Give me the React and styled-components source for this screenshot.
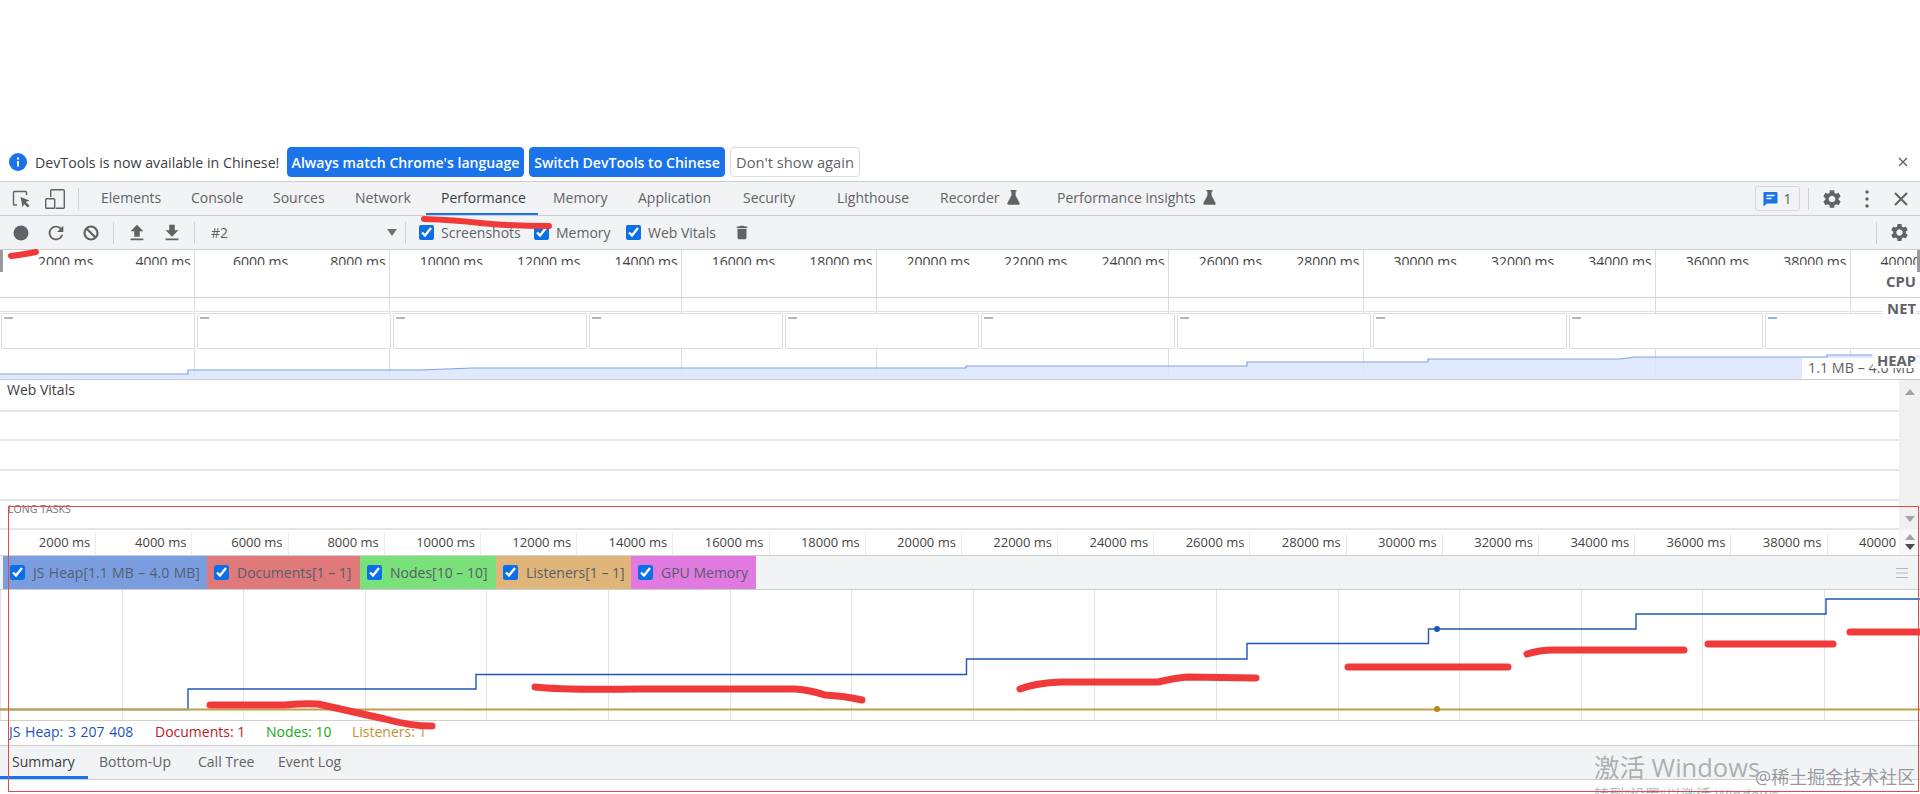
import React from "react";
import styled, { createGlobalStyle } from "styled-components";

const Global = createGlobalStyle`
  html, body { margin: 0; padding: 0; background: #fff; }
  body { width: 1920px; height: 794px; overflow: hidden; font-family: "Open Sans", "Liberation Sans", sans-serif; }
  * { box-sizing: border-box; }
`;

const Page = styled.div`
  position: relative;
  width: 1920px;
  height: 794px;
  overflow: hidden;
  padding-top: 143px;
  font-size: 14px;
  color: #5f6368;
`;

const InfoBar = styled.div`
  height: 39px;
  display: flex;
  align-items: center;
  border-bottom: 1px solid #cbcdd1;
  padding-left: 9px;
`;
const InfoText = styled.span`
  margin-left: 8px;
  padding-top: 1px;
  width: 252px;
  color: #3c4043;
  font-size: 14.2px;
  white-space: nowrap;
`;
const InfoButton = styled.div`
  height: 30px;
  width: ${p => p.$w}px;
  margin-right: 5px;
  border-radius: 4px;
  display: flex;
  align-items: center;
  justify-content: center;
  white-space: nowrap;
  font-size: ${p => (p.$primary ? 14.1 : 14.7)}px;
  font-weight: ${p => (p.$primary ? 600 : 400)};
  color: ${p => (p.$primary ? "#fff" : "#5f6368")};
  background: ${p => (p.$primary ? "#1a73e8" : "#fff")};
  border: 1px solid ${p => (p.$primary ? "#1a73e8" : "#dadce0")};
`;
const CloseInfo = styled.div`
  margin-left: auto;
  width: 34px;
  display: flex;
  justify-content: center;
`;

const Bar = styled.div`
  height: 34px;
  display: flex;
  align-items: center;
  background: #f1f3f4;
  border-bottom: 1px solid #cbcdd1;
  flex-shrink: 0;
`;
const Slot = styled.div`
  width: ${p => p.$w || 35}px;
  margin-left: ${p => p.$ml || 0}px;
  height: 100%;
  display: flex;
  align-items: center;
  justify-content: center;
  flex-shrink: 0;
`;
const Sep = styled.div`
  width: 1px;
  height: 22px;
  background: #cfd1d4;
  margin: 0 ${p => p.$mr ?? 5}px 0 ${p => p.$ml ?? 5}px;
  flex-shrink: 0;
`;
const Tab = styled.div`
  position: relative;
  height: 100%;
  width: ${p => p.$w}px;
  padding: 0 0 3px ${p => p.$pl ?? 15}px;
  display: flex;
  align-items: center;
  gap: 7px;
  white-space: nowrap;
  color: ${p => (p.$active ? "#3c4043" : "#5f6368")};
  &::after {
    content: "";
    display: ${p => (p.$active ? "block" : "none")};
    position: absolute;
    left: 0;
    right: 0;
    bottom: 0;
    height: ${p => p.$lineH || 2}px;
    background: #1a73e8;
  }
`;
const Tabs = styled.div`
  display: flex;
  height: 100%;
  margin-left: ${p => p.$ml || 0}px;
`;
const RightGroup = styled.div`
  margin-left: auto;
  display: flex;
  align-items: center;
  height: 100%;
  padding-right: ${p => p.$pr || 0}px;
`;
const IssueButton = styled.div`
  width: 45px;
  height: 25px;
  border: 1px solid #d5d7da;
  border-radius: 3px;
  display: flex;
  align-items: center;
  justify-content: center;
  gap: 5px;
  font-size: 14px;
`;
const TargetSelect = styled.div`
  width: 200px;
  padding: 0 3px 0 11px;
  display: flex;
  align-items: center;
  justify-content: space-between;
`;
const Caret = styled.div`
  width: 0;
  height: 0;
  border-left: 5px solid transparent;
  border-right: 5px solid transparent;
  border-top: 7px solid #6e7276;
`;
const Check = styled.input.attrs({ type: "checkbox", defaultChecked: true })`
  width: 15px;
  height: 15px;
  margin: 0;
  accent-color: #0b6fe8;
  flex-shrink: 0;
`;
const CheckItem = styled.label`
  width: ${p => p.$w}px;
  margin-left: ${p => p.$ml || 0}px;
  display: flex;
  align-items: center;
  gap: 7px;
  white-space: nowrap;
  flex-shrink: 0;
`;

const Overview = styled.div`
  position: relative;
  height: 130px;
  border-bottom: 1px solid #c9cbce;
  overflow: hidden;
  background-image: repeating-linear-gradient(90deg, transparent 0 96.9px, #dcdcdc 96.9px 97.4px);
`;
const OverRuler = styled.div`
  display: flex;
  height: 15px;
  overflow: hidden;
`;
const OverCell = styled.div`
  flex: 0 0 97.4px;
  text-align: right;
  padding-right: 4px;
  line-height: 23px;
  color: #444;
  white-space: nowrap;
`;
const CpuTrack = styled.div`
  height: 33px;
  border-bottom: 1px solid #d4d4d4;
`;
const NetTrack = styled.div`
  height: 14px;
  border-bottom: 1px solid #e2e2e2;
`;
const Frames = styled.div`
  display: flex;
  gap: 2px;
  margin-top: 1px;
  padding-left: 1px;
  height: 36px;
  background: #fff;
  width: 1960px;
`;
const Frame = styled.div`
  flex: 0 0 194px;
  border: 1px solid #dcdcdc;
  border-radius: 1px;
  padding: 3px 0 0 2px;
  &::before {
    content: "";
    display: block;
    width: 9px;
    height: 2px;
    background: ${p => (p.$last ? "#8ab4e8" : "#b5b5b5")};
  }
`;
const HeapSvg = styled.svg`
  display: block;
  width: 1920px;
  height: 30px;
`;
const Handle = styled.div`
  position: absolute;
  top: 0;
  ${p => (p.$right ? "right: 0;" : "left: 0;")}
  width: 3px;
  height: 22px;
  background: #9a9a9a;
`;
const TrackLabel = styled.div`
  position: absolute;
  right: 4px;
  top: ${p => p.$top}px;
  height: ${p => p.$h || 18}px;
  font-size: 14.8px;
  line-height: 18px;
  font-weight: 700;
  color: #5f6368;
  background: ${p => (p.$bg ? "#fff" : "transparent")};
  padding-left: ${p => (p.$bg ? 4 : 0)}px;
  overflow: hidden;
`;
const RangeLabel = styled.div`
  position: absolute;
  right: 0;
  bottom: 0;
  width: 118px;
  height: 21px;
  padding-left: 6px;
  line-height: 20px;
  background: #fff;
  white-space: nowrap;
  overflow: hidden;
  font-size: 14.3px;
  color: #5f6368;
`;

const ScrollArea = styled.div`
  display: flex;
  height: 176px;
`;
const ScrollMain = styled.div`
  width: 1899px;
  overflow: hidden;
`;
const VitalRow = styled.div`
  height: ${p => p.$h}px;
  border-bottom: 2px solid #e6e6e6;
  padding-left: 7px;
  color: #3c4043;
  line-height: 20px;
  white-space: nowrap;
`;
const LongTasks = styled.div`
  height: 29px;
  border-bottom: 2px solid #e6e6e6;
  padding-left: 8px;
  font-size: 10.6px;
  line-height: 17px;
  color: #777;
`;
const Ruler = styled.div`
  display: flex;
  height: 26px;
  width: 2000px;
  border-bottom: 1px solid #d0d0d0;
`;
const RulerCell = styled.div`
  flex: 0 0 96.2px;
  margin-top: 2px;
  text-align: right;
  padding-right: 5px;
  font-size: 13px;
  line-height: 21px;
  color: #444;
  white-space: nowrap;
  border-right: 1px solid #ececec;
`;
const Scrollbar = styled.div`
  width: 21px;
  display: flex;
  flex-direction: column;
  background: #f0f0f0;
`;
const ScrollTrack = styled.div`
  flex: 1;
  display: flex;
  flex-direction: column;
  align-items: center;
  justify-content: space-between;
  padding: 9px 0 7px;
`;
const Steppers = styled.div`
  height: 27px;
  background: #f7f7f7;
  border-bottom: 1px solid #d0d0d0;
  display: flex;
  flex-direction: column;
  align-items: center;
  justify-content: center;
  gap: 4px;
`;
const Arrow = styled.div`
  width: 0;
  height: 0;
  border-left: 5px solid transparent;
  border-right: 5px solid transparent;
  ${p => (p.$up ? "border-bottom" : "border-top")}: 6px solid ${p => p.$c || "#a3a3a3"};
`;

const Legend = styled.div`
  height: 34px;
  padding-left: 3px;
  display: flex;
  background: #f1f3f4;
  border-bottom: 1px solid #cbcdd1;
`;
const LegendItem = styled.label`
  width: ${p => p.$w}px;
  padding-left: 7px;
  display: flex;
  align-items: center;
  gap: 8px;
  background: ${p => p.$c};
  color: #565d6d;
  font-size: 14px;
  word-spacing: ${p => p.$ws || 0}px;
  white-space: nowrap;
  overflow: hidden;
`;
const Hamburger = styled.div`
  margin-left: auto;
  width: 36px;
  display: flex;
  align-items: center;
  justify-content: center;
`;

const Chart = styled.div`
  height: 131px;
  border-bottom: 1px solid #d0d0d0;
  background-image: repeating-linear-gradient(90deg, #e3e3e3 0 1px, transparent 1px 121.6px);
`;
const ChartSvg = styled.svg`
  display: block;
  width: 1920px;
  height: 130px;
`;
const StatusRow = styled.div`
  height: 25px;
  display: flex;
  align-items: center;
  padding: 0 0 3px 9px;
  border-bottom: 1px solid #cbcdd1;
  font-size: 14px;
`;
const Stat = styled.span`
  width: ${p => p.$w}px;
  color: ${p => p.$c};
  word-spacing: ${p => p.$ws || 0}px;
  white-space: nowrap;
`;

const RedBox = styled.div`
  position: absolute;
  left: 8px;
  top: 506px;
  width: 1911px;
  height: 286px;
  border: 1px solid #e24a4a;
  pointer-events: none;
`;
const Ink = styled.svg`
  position: absolute;
  left: 0;
  top: 0;
  width: 1920px;
  height: 794px;
  pointer-events: none;
`;
const ActivateTitle = styled.div`
  position: absolute;
  left: 1594px;
  top: 749px;
  font-family: "Open Sans", "Noto Sans CJK SC", sans-serif;
  font-size: 25.5px;
  line-height: 36px;
  color: rgba(110, 115, 120, 0.55);
  white-space: nowrap;
`;
const ActivateSub = styled.div`
  position: absolute;
  left: 1594px;
  top: 784px;
  font-family: "Open Sans", "Noto Sans CJK SC", sans-serif;
  font-size: 15px;
  line-height: 20px;
  color: rgba(110, 115, 120, 0.5);
  white-space: nowrap;
`;
const Mark = styled.div`
  position: absolute;
  left: 1755px;
  top: 764px;
  font-family: "Open Sans", "Noto Sans CJK SC", sans-serif;
  font-size: 18px;
  line-height: 26px;
  color: rgba(105, 110, 115, 0.7);
  text-shadow: 0 0 2px #fff;
  white-space: nowrap;
`;

const Gear = ({ size = 20 }) => (
  <svg width={size} height={size} viewBox="0 0 24 24" fill="#5f6368">
    <path d="M19.14 12.94c.04-.3.06-.61.06-.94 0-.32-.02-.64-.07-.94l2.03-1.58c.18-.14.23-.41.12-.61l-1.92-3.32c-.12-.22-.37-.29-.59-.22l-2.39.96c-.5-.38-1.03-.7-1.62-.94l-.36-2.54c-.04-.24-.24-.41-.48-.41h-3.84c-.24 0-.43.17-.47.41l-.36 2.54c-.59.24-1.13.57-1.62.94l-2.39-.96c-.22-.08-.47 0-.59.22L2.74 8.87c-.12.21-.08.47.12.61l2.03 1.58c-.05.3-.09.63-.09.94s.02.64.07.94l-2.03 1.58c-.18.14-.23.41-.12.61l1.92 3.32c.12.22.37.29.59.22l2.39-.96c.5.38 1.03.7 1.62.94l.36 2.54c.05.24.24.41.48.41h3.84c.24 0 .44-.17.47-.41l.36-2.54c.59-.24 1.13-.56 1.62-.94l2.39.96c.22.08.47 0 .59-.22l1.92-3.32c.12-.22.07-.47-.12-.61l-2.01-1.58zM12 15.6c-1.98 0-3.6-1.62-3.6-3.6s1.62-3.6 3.6-3.6 3.6 1.62 3.6 3.6-1.62 3.6-3.6 3.6z" />
  </svg>
);
const Flask = () => (
  <svg width="13" height="15" viewBox="0 0 13 15" fill="#5f6368">
    <path d="M3.5 0h6v1.4H8.6V5.6l4 7.4c.4.8-.1 1.7-1 1.7H1.4c-.9 0-1.4-.9-1-1.7l4-7.4V1.4h-.9z" />
  </svg>
);
const Mat = ({ d, size = 20 }) => (
  <svg width={size} height={size} viewBox="0 0 24 24" fill="#5f6368"><path d={d} /></svg>
);

const overLabels = Array.from({ length: 20 }, (_, i) => `${(i + 1) * 2000} ms`);
const frames = Array.from({ length: 10 }, (_, i) => i);

const heapPts = "0,374 188,374 188,370 420,370 473,368 966,368 966,366 1247,366 1247,362 1428,362 1428,359 1620,359 1635,357 1827,357 1827,355 1872,355";
const memPath = "M0 709.5H188V689H476V674.5H966.5V659H1247V643.5H1428.5V629H1636V614H1826V599H1920";

const strokes = [
  { d: "M424 219 Q 455 220 480 223 Q 510 226 549 226", w: 6 },
  { d: "M11 256 Q 20 255 36 252", w: 6 },
  { d: "M210 705 L 285 705 Q 305 703 318 704 L 385 719 Q 410 726 432 726", w: 7 },
  { d: "M535 687 Q 560 690 640 689 L 795 689 Q 810 690 825 695 Q 845 696 862 700", w: 7 },
  { d: "M1020 689 Q 1035 683 1062 682 L 1158 682 Q 1175 678 1187 677 L 1256 678", w: 7 },
  { d: "M1348 667 L 1508 667", w: 7 },
  { d: "M1527 654 Q 1540 650 1553 650 L 1684 650", w: 7 },
  { d: "M1708 644 L 1833 644", w: 7 },
  { d: "M1850 632 L 1920 632", w: 7 },
];

export default function App() {
  return (
    <Page>
      <Global />
      <InfoBar>
        <svg width="18" height="18" viewBox="0 0 18 18">
          <circle cx="9" cy="9" r="9" fill="#1a73e8" />
          <rect x="8" y="8" width="2" height="5.5" fill="#fff" />
          <rect x="8" y="4.5" width="2" height="2" fill="#fff" />
        </svg>
        <InfoText>DevTools is now available in Chinese!</InfoText>
        <InfoButton $primary $w={237}>Always match Chrome's language</InfoButton>
        <InfoButton $primary $w={196}>Switch DevTools to Chinese</InfoButton>
        <InfoButton $w={130}>Don't show again</InfoButton>
        <CloseInfo>
          <svg width="10" height="10" viewBox="0 0 10 10" stroke="#5f6368" strokeWidth="1.4"><path d="M1 1l8 8M9 1l-8 8" /></svg>
        </CloseInfo>
      </InfoBar>

      <Bar>
        <Slot $w={22} $ml={10}>
          <svg width="22" height="22" viewBox="0 0 22 22" fill="none">
            <path d="M7 17H4.5a1 1 0 0 1-1-1V4.5a1 1 0 0 1 1-1h11a1 1 0 0 1 1 1V7" stroke="#5f6368" strokeWidth="1.4" />
            <path d="M10.5 9l9 3.6-3.6 1.5 3.6 3.6-1.8 1.8-3.6-3.6-1.5 3.6z" fill="#5f6368" />
          </svg>
        </Slot>
        <Slot $w={20} $ml={13}>
          <svg width="20" height="20" viewBox="0 0 20 20" fill="none" stroke="#5f6368" strokeWidth="1.4">
            <path d="M5.7 8V1.7a1 1 0 0 1 1-1h11.6a1 1 0 0 1 1 1V18.3a1 1 0 0 1-1 1H10.5" />
            <rect x="0.7" y="9.7" width="9" height="9.6" rx="1" />
          </svg>
        </Slot>
        <Sep $ml={13} $mr={0} />
        <Tabs $ml={7}>
          <Tab $w={90}>Elements</Tab>
          <Tab $w={82}>Console</Tab>
          <Tab $w={82}>Sources</Tab>
          <Tab $w={86}>Network</Tab>
          <Tab $w={112} $active>Performance</Tab>
          <Tab $w={85}>Memory</Tab>
          <Tab $w={105}>Application</Tab>
          <Tab $w={94}>Security</Tab>
          <Tab $w={103}>Lighthouse</Tab>
          <Tab $w={117}>Recorder <Flask /></Tab>
          <Tab $w={190}>Performance insights <Flask /></Tab>
        </Tabs>
        <RightGroup $pr={2}>
          <IssueButton>
            <svg width="15" height="16" viewBox="0 0 15 16">
              <path d="M1.5 1h12a1 1 0 0 1 1 1v9.5a1 1 0 0 1-1 1H4L.5 15.5V2a1 1 0 0 1 1-1z" fill="#1a73e8" />
              <path d="M3.5 4.5h8M3.5 7.5h5" stroke="#fff" strokeWidth="1.3" />
            </svg>
            1
          </IssueButton>
          <Sep $ml={8} $mr={6} />
          <Slot $w={34}><Gear size={22} /></Slot>
          <Slot $w={35}>
            <svg width="4" height="18" viewBox="0 0 4 18" fill="#5f6368"><circle cx="2" cy="2" r="1.7" /><circle cx="2" cy="9" r="1.7" /><circle cx="2" cy="16" r="1.7" /></svg>
          </Slot>
          <Slot $w={34}>
            <svg width="14" height="14" viewBox="0 0 14 14" stroke="#5f6368" strokeWidth="2"><path d="M1 1l12 12M13 1L1 13" /></svg>
          </Slot>
        </RightGroup>
      </Bar>

      <Bar>
        <Slot $ml={3}><svg width="16" height="16" viewBox="0 0 16 16"><circle cx="8" cy="8" r="7.5" fill="#5f6368" /></svg></Slot>
        <Slot><Mat size={22} d="M17.65 6.35A7.958 7.958 0 0 0 12 4c-4.42 0-7.99 3.58-7.99 8s3.57 8 7.99 8c3.73 0 6.84-2.55 7.73-6h-2.08A5.99 5.99 0 0 1 12 18c-3.31 0-6-2.69-6-6s2.69-6 6-6c1.66 0 3.14.69 4.22 1.78L13 11h7V4l-2.35 2.35z" /></Slot>
        <Slot>
          <svg width="16" height="16" viewBox="0 0 16 16" fill="none" stroke="#5f6368" strokeWidth="2.2"><circle cx="8" cy="8" r="6.5" /><path d="M3.5 3.5l9 9" /></svg>
        </Slot>
        <Sep />
        <Slot><Mat size={22} d="M9 16h6v-6h4l-7-7-7 7h4v6zm-4 2h14v2H5v-2z" /></Slot>
        <Slot><Mat size={22} d="M19 9h-4V3H9v6H5l7 7 7-7zM5 18v2h14v-2H5z" /></Slot>
        <Sep />
        <TargetSelect>#2<Caret /></TargetSelect>
        <Sep />
        <CheckItem $ml={8} $w={115}><Check />Screenshots</CheckItem>
        <CheckItem $w={92}><Check />Memory</CheckItem>
        <CheckItem $w={107}><Check />Web Vitals</CheckItem>
        <Slot $w={18}><Mat size={23} d="M6 19c0 1.1.9 2 2 2h8c1.1 0 2-.9 2-2V7H6v12zM19 4h-3.5l-1-1h-5l-1 1H5v2h14V4z" /></Slot>
        <RightGroup $pr={3}>
          <Sep $ml={0} $mr={5} />
          <Slot $w={35}><Gear size={21} /></Slot>
        </RightGroup>
      </Bar>

      <Overview>
        <OverRuler>
          {overLabels.map(l => <OverCell key={l}>{l}</OverCell>)}
        </OverRuler>
        <CpuTrack />
        <NetTrack />
        <Frames>
          {frames.map(i => <Frame key={i} $last={i === 9} />)}
        </Frames>
        <HeapSvg viewBox="0 349 1920 30">
          <polygon points={`0,379 ${heapPts} 1920,355 1920,379`} fill="#dbe6fb" fillOpacity="0.85" />
          <polyline points={heapPts} fill="none" stroke="#7ea4e4" strokeWidth="1.2" />
        </HeapSvg>
        <Handle />
        <Handle $right />
        <RangeLabel>1.1 MB – 4.0 MB</RangeLabel>
        <TrackLabel $top={22}>CPU</TrackLabel>
        <TrackLabel $top={49} $bg>NET</TrackLabel>
        <TrackLabel $top={101} $h={17} $bg>HEAP</TrackLabel>
      </Overview>

      <ScrollArea>
        <ScrollMain>
          <VitalRow $h={32}>Web Vitals</VitalRow>
          <VitalRow $h={29} />
          <VitalRow $h={30} />
          <VitalRow $h={30} />
          <LongTasks>LONG TASKS</LongTasks>
          <Ruler>
            {overLabels.map(l => <RulerCell key={l}>{l}</RulerCell>)}
          </Ruler>
        </ScrollMain>
        <Scrollbar>
          <ScrollTrack><Arrow $up /><Arrow /></ScrollTrack>
          <Steppers><Arrow $up /><Arrow $c="#4a4a4a" /></Steppers>
        </Scrollbar>
      </ScrollArea>

      <Legend>
        <LegendItem $w={204} $c="#7a9de0" $ws={0.8}><Check />JS Heap[1.1 MB – 4.0 MB]</LegendItem>
        <LegendItem $w={153} $c="#e07a7a"><Check />Documents[1 – 1]</LegendItem>
        <LegendItem $w={136} $c="#7ae07a"><Check />Nodes[10 – 10]</LegendItem>
        <LegendItem $w={135} $c="#e0b57a"><Check />Listeners[1 – 1]</LegendItem>
        <LegendItem $w={125} $c="#e07ae0"><Check />GPU Memory</LegendItem>
        <Hamburger>
          <svg width="12" height="10" viewBox="0 0 12 10" stroke="#b4b6b9" strokeWidth="1"><path d="M0 .5h12M0 5h12M0 9.5h12" /></svg>
        </Hamburger>
      </Legend>

      <Chart>
        <ChartSvg viewBox="0 590 1920 130">
          <path d={memPath} stroke="#1d56b8" strokeWidth="1.4" fill="none" />
          <path d="M0 709.5H1920" stroke="#c29f42" strokeWidth="2" fill="none" />
          <circle cx="1437" cy="629" r="3" fill="#1d56b8" />
          <circle cx="1437" cy="709" r="3" fill="#b8891a" />
        </ChartSvg>
      </Chart>

      <StatusRow>
        <Stat $w={146} $c="#1d56b8" $ws={1}>JS Heap: 3 207 408</Stat>
        <Stat $w={111} $c="#c0181b">Documents: 1</Stat>
        <Stat $w={86} $c="#17a817">Nodes: 10</Stat>
        <Stat $w={100} $c="#c8902a">Listeners: 1</Stat>
      </StatusRow>

      <Bar>
        <Tab $w={88} $pl={12} $lineH={3} $active>Summary</Tab>
        <Tab $w={99} $pl={11}>Bottom-Up</Tab>
        <Tab $w={80} $pl={11}>Call Tree</Tab>
        <Tab $w={100} $pl={11}>Event Log</Tab>
      </Bar>

      <Ink viewBox="0 0 1920 794">
        {strokes.map((s, i) => (
          <path key={i} d={s.d} fill="none" stroke="#f03a3a" strokeWidth={s.w} strokeLinecap="round" strokeLinejoin="round" />
        ))}
      </Ink>
      <RedBox />
      <ActivateTitle>激活 Windows</ActivateTitle>
      <ActivateSub>转到"设置"以激活 Windows。</ActivateSub>
      <Mark>@稀土掘金技术社区</Mark>
    </Page>
  );
}
